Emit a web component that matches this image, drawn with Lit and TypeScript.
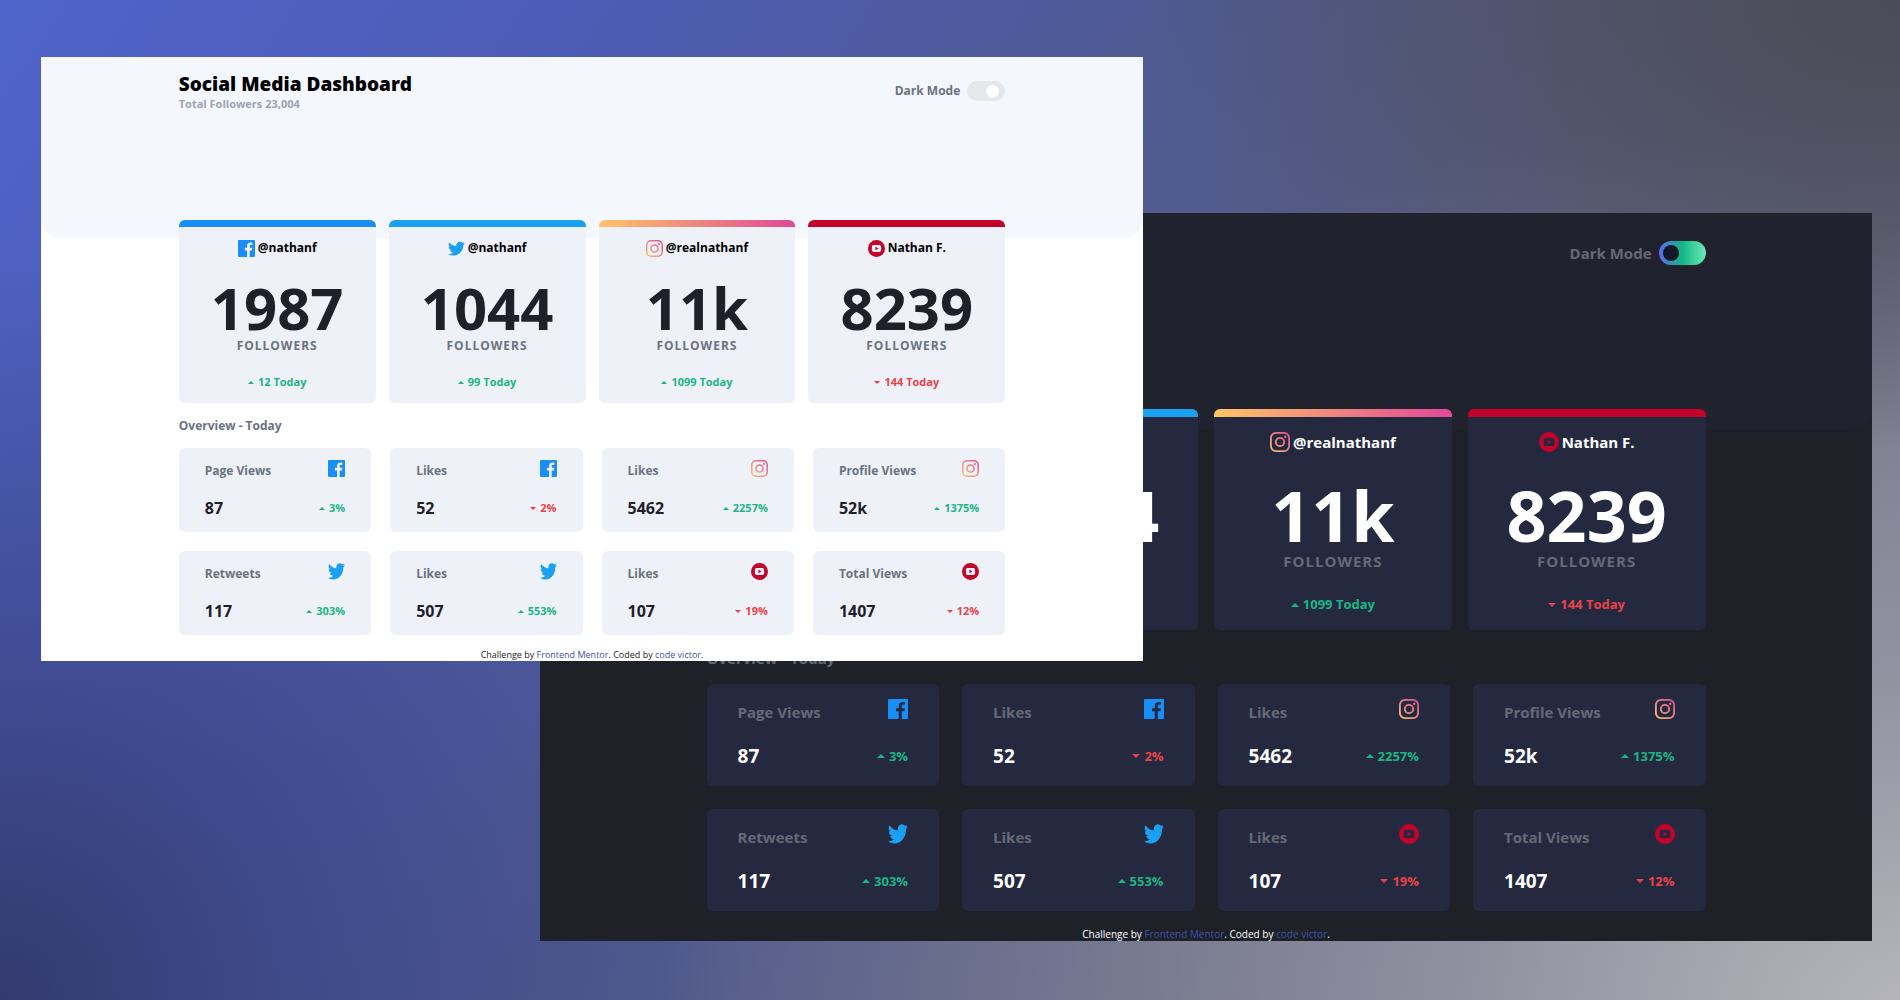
import { LitElement, html, css, svg } from "lit";
import { customElement, property } from "lit/decorators.js";

type Network = "facebook" | "twitter" | "instagram" | "youtube";

interface Account {
  network: Network;
  handle: string;
  count: string;
  today: number;
}

interface Stat {
  label: string;
  network: Network;
  value: string;
  change: number;
}

const ACCOUNTS: Account[] = [
  { network: "facebook", handle: "@nathanf", count: "1987", today: 12 },
  { network: "twitter", handle: "@nathanf", count: "1044", today: 99 },
  { network: "instagram", handle: "@realnathanf", count: "11k", today: 1099 },
  { network: "youtube", handle: "Nathan F.", count: "8239", today: -144 },
];

const STATS: Stat[] = [
  { label: "Page Views", network: "facebook", value: "87", change: 3 },
  { label: "Likes", network: "facebook", value: "52", change: -2 },
  { label: "Likes", network: "instagram", value: "5462", change: 2257 },
  { label: "Profile Views", network: "instagram", value: "52k", change: 1375 },
  { label: "Retweets", network: "twitter", value: "117", change: 303 },
  { label: "Likes", network: "twitter", value: "507", change: 553 },
  { label: "Likes", network: "youtube", value: "107", change: -19 },
  { label: "Total Views", network: "youtube", value: "1407", change: -12 },
];

@customElement("brand-icon")
export class BrandIcon extends LitElement {
  @property() network: Network = "facebook";
  @property({ type: Boolean }) tall = false;

  static styles = css`
    :host {
      display: block;
      width: var(--icon);
      height: var(--icon);
      flex: none;
    }
    svg {
      display: block;
      width: 100%;
      height: 100%;
    }
  `;

  private shape() {
    switch (this.network) {
      case "facebook":
        return svg`<path fill="#198ff5" d="M18.896 0H1.104C.494 0 0 .494 0 1.104v17.793C0 19.506.494 20 1.104 20h9.58v-7.745H8.076V9.237h2.606V7.01c0-2.583 1.578-3.99 3.883-3.99 1.104 0 2.052.082 2.329.119v2.7h-1.598c-1.254 0-1.496.597-1.496 1.47v1.928h2.989l-.39 3.018h-2.6V20h5.098c.608 0 1.102-.494 1.102-1.104V1.104C20 .494 19.506 0 18.896 0z"/>`;
      case "twitter":
        return svg`<path fill="#1ca0f2" transform=${this.tall ? "scale(1 1.18)" : "translate(0 1.8)"} d="M20 2.172a8.192 8.192 0 01-2.357.646 4.11 4.11 0 001.805-2.27 8.22 8.22 0 01-2.606.996A4.096 4.096 0 0013.847.248c-2.65 0-4.596 2.472-3.998 5.037A11.648 11.648 0 011.392.998a4.109 4.109 0 001.27 5.478 4.086 4.086 0 01-1.858-.513c-.045 1.9 1.318 3.679 3.291 4.075a4.113 4.113 0 01-1.853.07 4.106 4.106 0 003.833 2.849A8.25 8.25 0 010 14.658a11.616 11.616 0 006.29 1.843c7.618 0 11.922-6.434 11.662-12.205A8.354 8.354 0 0020 2.172z"/>`;
      case "instagram":
        return svg`
          <defs>
            <linearGradient id="ig" x1="0" y1="1" x2="1" y2="0">
              <stop offset="0" stop-color="#fdc468"/>
              <stop offset="1" stop-color="#df4996"/>
            </linearGradient>
          </defs>
          <path fill="url(#ig)" fill-rule="evenodd" d="M5.9 0h8.2A5.9 5.9 0 0120 5.9v8.2a5.9 5.9 0 01-5.9 5.9H5.9A5.9 5.9 0 010 14.1V5.9A5.9 5.9 0 015.9 0zm.1 1.8A4.2 4.2 0 001.8 6v8A4.2 4.2 0 006 18.2h8a4.2 4.2 0 004.2-4.2V6A4.2 4.2 0 0014 1.8zm4 3.1a5.1 5.1 0 110 10.2 5.1 5.1 0 010-10.2zm0 1.8a3.3 3.3 0 100 6.6 3.3 3.3 0 000-6.6zm5.3-3.2a1.2 1.2 0 110 2.4 1.2 1.2 0 010-2.4z"/>`;
      case "youtube":
        return svg`<path fill="#c4032a" fill-rule="evenodd" d="M10 0a10 10 0 110 20 10 10 0 010-20zM6.7 5.9c-1.3.1-2 .9-2.1 2.1-.1 1.3-.1 2.7 0 4 .1 1.2.8 2 2.1 2.1 2.2.1 4.4.1 6.6 0 1.3-.1 2-.9 2.1-2.1.1-1.3.1-2.7 0-4-.1-1.2-.8-2-2.1-2.1-2.2-.1-4.4-.1-6.6 0zM8.7 7.9l3.7 2.1-3.7 2.1z"/>`;
    }
  }

  render() {
    return html`<svg viewBox="0 0 20 20" aria-hidden="true">${this.shape()}</svg>`;
  }
}

@customElement("trend-value")
export class TrendValue extends LitElement {
  @property({ type: Number }) amount = 0;
  @property() suffix = "";

  static styles = css`
    :host {
      display: block;
      font-size: var(--fs-small);
      line-height: var(--lh-small);
    }
    .trend {
      display: flex;
      align-items: center;
      gap: 4px;
    }
    svg {
      display: block;
      width: var(--arrow-w);
      height: var(--arrow-h);
      fill: currentColor;
    }
    .up {
      color: #1bb584;
    }
    .down {
      color: #ea4248;
    }
  `;

  render() {
    const up = this.amount >= 0;
    return html`<span class="trend ${up ? "up" : "down"}">
      <svg viewBox="0 0 8 4" preserveAspectRatio="none" aria-hidden="true">
        <path d=${up ? "M0 4L4 0L8 4Z" : "M0 0H8L4 4Z"} />
      </svg>
      <span>${Math.abs(this.amount)}${this.suffix}</span>
    </span>`;
  }
}

@customElement("social-dashboard")
export class SocialDashboard extends LitElement {
  @property({ reflect: true }) theme: "light" | "dark" = "light";

  static styles = css`
    :host {
      display: block;
      box-sizing: border-box;
      font-family: "Open Sans", "Noto Sans", "Liberation Sans", sans-serif;
      font-weight: 700;
      color: var(--ink);
      background: var(--page);
      overflow: hidden;

      --ink: #000;
      --number: #1e202a;
      --muted: #6b7280;
      --page: #fff;
      --band: #f5f7ff;
      --card: #eff1f9;
      --footer: #1e202a;
      --band-h: 181px;
      --fs-title: 19px;
      --lh-title: 24px;
      --fs-body: 12px;
      --lh-body: 18px;
      --fs-small: 11px;
      --lh-small: 16px;
      --fs-value: 16px;
      --fs-count: 58px;
      --lh-count: 58px;
      --fs-foot: 9px;
      --lh-foot: 12px;
      --icon: 17px;
      --arrow-w: 6px;
      --arrow-h: 3px;
      --top: 15px;
      --switch-top: 9px;
      --head-h: 148px;
      --strip: 7px;
      --card-top: 12px;
      --count-top: 22px;
      --today-top: 19px;
      --card-bottom: 13px;
      --gap: 13px;
      --tile-gap: 19px;
      --tile-x: 26px;
      --tile-y: 12px;
      --tile-h: 84px;
      --over-top: 14px;
      --over-bottom: 13px;
      --foot-top: 14px;
    }
    :host([theme="dark"]) {
      --ink: #fff;
      --number: #fff;
      --muted: #646977;
      --page: #1e2128;
      --band: #20222d;
      --card: #252940;
      --footer: #fff;
      --band-h: 217px;
      --fs-title: 23px;
      --lh-title: 30px;
      --fs-body: 15px;
      --lh-body: 22px;
      --fs-small: 13px;
      --lh-small: 19px;
      --fs-value: 19px;
      --fs-count: 70px;
      --lh-count: 70px;
      --fs-foot: 10px;
      --lh-foot: 14px;
      --icon: 20px;
      --arrow-w: 8px;
      --arrow-h: 4px;
      --top: 18px;
      --switch-top: 10px;
      --head-h: 178px;
      --strip: 8px;
      --card-top: 14px;
      --count-top: 27px;
      --today-top: 23px;
      --card-bottom: 16px;
      --gap: 16px;
      --tile-gap: 23px;
      --tile-x: 31px;
      --tile-y: 15px;
      --tile-h: 102px;
      --over-top: 17px;
      --over-bottom: 15px;
      --foot-top: 16px;
    }

    .page {
      display: grid;
      grid-template-columns: 100%;
    }
    .band {
      grid-area: 1 / 1;
      height: var(--band-h);
      border-radius: 0 0 20px 20px;
      background: var(--band);
    }
    .content {
      grid-area: 1 / 1;
      width: 75%;
      margin: 0 auto;
      padding-top: var(--top);
    }

    .head {
      display: flex;
      justify-content: space-between;
      align-items: flex-start;
      height: var(--head-h);
    }
    h1,
    h2,
    h3,
    p {
      margin: 0;
      font-weight: inherit;
    }
    h1 {
      font-size: var(--fs-title);
      line-height: var(--lh-title);
      font-weight: 800;
    }
    .total {
      font-size: var(--fs-small);
      line-height: var(--lh-small);
      color: #9ca3af;
    }

    .switch {
      display: flex;
      align-items: center;
      gap: 7px;
      padding-top: var(--switch-top);
      color: var(--muted);
      font-size: var(--fs-body);
      line-height: 20px;
    }
    .switch input {
      appearance: none;
      display: flex;
      align-items: center;
      justify-content: flex-end;
      box-sizing: border-box;
      margin: 0;
      width: 38px;
      height: 20px;
      padding: 0 6px;
      border-radius: 10px;
      background: #e5e7eb;
    }
    .switch input::before {
      content: "";
      width: 13px;
      height: 13px;
      border-radius: 50%;
      background: #fff;
    }
    .switch input:checked {
      width: 47px;
      height: 24px;
      padding: 0 4px;
      border-radius: 12px;
      justify-content: flex-start;
      background: linear-gradient(90deg, #6366f1, #10b981 50%, #6ee7b7);
    }
    .switch input:checked::before {
      width: 16px;
      height: 16px;
      background: #111827;
    }

    .accounts {
      display: grid;
      grid-template-columns: repeat(4, 1fr);
      gap: var(--gap);
    }
    .account {
      display: flex;
      flex-direction: column;
      align-items: center;
      border-radius: 6px;
      background: var(--card);
      overflow: hidden;
      padding-bottom: var(--card-bottom);
    }
    .strip {
      align-self: stretch;
      height: var(--strip);
    }
    .facebook {
      background: #198ff5;
    }
    .twitter {
      background: #1ca0f2;
    }
    .instagram {
      background: linear-gradient(90deg, #fdc468, #df4996);
    }
    .youtube {
      background: #c4032a;
    }
    .handle {
      display: flex;
      align-items: center;
      gap: 3px;
      padding-top: var(--card-top);
      font-size: var(--fs-body);
      line-height: var(--lh-body);
    }
    .count {
      padding-top: var(--count-top);
      font-size: var(--fs-count);
      line-height: var(--lh-count);
      color: var(--number);
    }
    .unit {
      font-size: var(--fs-body);
      line-height: var(--lh-body);
      letter-spacing: 1px;
      text-transform: uppercase;
      color: var(--muted);
    }
    .today {
      padding-top: var(--today-top);
    }

    h2 {
      padding: var(--over-top) 0 var(--over-bottom);
      font-size: var(--fs-body);
      line-height: var(--lh-body);
      color: var(--muted);
    }
    .stats {
      display: grid;
      grid-template-columns: repeat(4, 1fr);
      gap: var(--tile-gap);
    }
    .stat {
      display: flex;
      flex-direction: column;
      justify-content: space-between;
      box-sizing: border-box;
      min-height: var(--tile-h);
      padding: var(--tile-y) var(--tile-x);
      border-radius: 6px;
      background: var(--card);
    }
    .row {
      display: flex;
      align-items: center;
      justify-content: space-between;
    }
    .row.top {
      align-items: flex-start;
    }
    .label {
      padding-top: 2px;
      font-size: var(--fs-body);
      line-height: var(--lh-body);
      color: var(--muted);
    }
    .value {
      font-size: var(--fs-value);
      line-height: var(--lh-title);
      color: var(--number);
    }

    footer {
      padding-top: var(--foot-top);
      text-align: center;
      font-size: var(--fs-foot);
      line-height: var(--lh-foot);
      font-weight: 400;
      color: var(--footer);
    }
    a {
      color: #3e52a3;
      text-decoration: none;
    }
  `;

  render() {
    return html`
      <div class="page">
        <div class="band"></div>
        <div class="content">
          <header class="head">
            <div>
              <h1>Social Media Dashboard</h1>
              <p class="total">Total Followers 23,004</p>
            </div>
            <label class="switch">
              Dark Mode
              <input type="checkbox" role="switch" .checked=${this.theme === "dark"} />
            </label>
          </header>
          <section class="accounts">
            ${ACCOUNTS.map(
              (a) => html`<article class="account">
                <div class="strip ${a.network}"></div>
                <h3 class="handle">
                  <brand-icon network=${a.network}></brand-icon>
                  <span>${a.handle}</span>
                </h3>
                <div class="count">${a.count}</div>
                <div class="unit">Followers</div>
                <trend-value class="today" .amount=${a.today} suffix=" Today"></trend-value>
              </article>`
            )}
          </section>
          <h2>Overview - Today</h2>
          <section class="stats">
            ${STATS.map(
              (s) => html`<article class="stat">
                <div class="row top">
                  <h3 class="label">${s.label}</h3>
                  <brand-icon network=${s.network} tall></brand-icon>
                </div>
                <div class="row">
                  <span class="value">${s.value}</span>
                  <trend-value .amount=${s.change} suffix="%"></trend-value>
                </div>
              </article>`
            )}
          </section>
          <footer>
            Challenge by <a href="#">Frontend Mentor</a>. Coded by <a href="#">code victor</a>.
          </footer>
        </div>
      </div>
    `;
  }
}

@customElement("app-root")
export class AppRoot extends LitElement {
  static styles = css`
    :host {
      display: block;
    }
    .desktop {
      position: relative;
      min-height: 100vh;
      overflow: hidden;
      background:
        radial-gradient(ellipse 40% 45% at 100% 0%, #4a4c56 0%, #4e5060cc 40%, #54566800 100%),
        radial-gradient(ellipse 65% 90% at 100% 100%, #b4b4ba 0%, #9a9aa8cc 35%, #80829800 100%),
        radial-gradient(ellipse 38% 75% at 0% 100%, #323a6e 0%, #3a4482bb 40%, #4453a000 100%),
        linear-gradient(125deg, #4f64ca 0%, #4d5cb6 22%, #4f5a92 46%, #5c5f78 75%, #808090 100%);
    }
    .window {
      position: absolute;
    }
    .front {
      left: 41px;
      top: 57px;
      width: 58%;
    }
    .back {
      right: 28px;
      top: 213px;
      width: 70.1%;
    }
  `;

  render() {
    return html`<main class="desktop">
      <social-dashboard class="window back" theme="dark"></social-dashboard>
      <social-dashboard class="window front" theme="light"></social-dashboard>
    </main>`;
  }
}
